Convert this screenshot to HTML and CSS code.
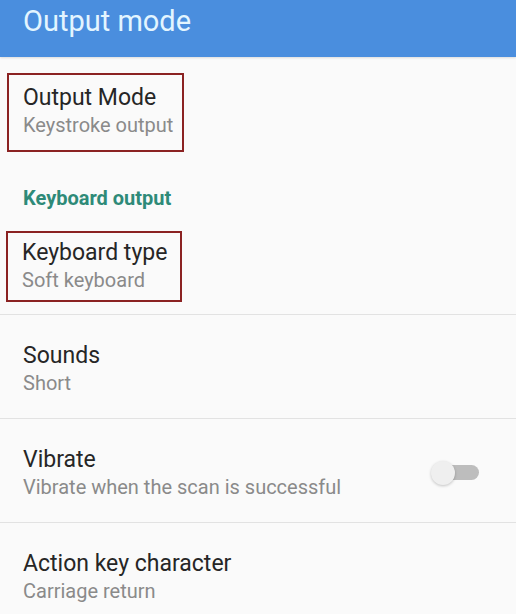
FILE: index.html
```html
<!DOCTYPE html>
<html lang="en">
<head>
    <meta charset="UTF-8">
    <meta name="viewport" content="width=device-width, initial-scale=1.0">
    <title>Output mode</title>
    <link rel="stylesheet" href="styles.css">
</head>
<body>
    <header class="toolbar">
        <h1>Output mode</h1>
    </header>

    <div class="prefs">
        <div class="pref pref-first">
            <div class="marked marked-wide">
                <div class="pref-title">Output Mode</div>
                <div class="pref-summary">Keystroke output</div>
            </div>
        </div>

        <div class="category">Keyboard output</div>

        <div class="pref pref-marked">
            <div class="marked marked-tight">
                <div class="pref-title">Keyboard type</div>
                <div class="pref-summary">Soft keyboard</div>
            </div>
        </div>

        <div class="pref pref-row">
            <div class="pref-text">
                <div class="pref-title">Sounds</div>
                <div class="pref-summary">Short</div>
            </div>
        </div>

        <div class="pref pref-row">
            <div class="pref-text">
                <div class="pref-title">Vibrate</div>
                <div class="pref-summary">Vibrate when the scan is successful</div>
            </div>
            <div class="switch">
                <span class="switch-thumb"></span>
                <span class="switch-track"></span>
            </div>
        </div>

        <div class="pref pref-row">
            <div class="pref-text">
                <div class="pref-title">Action key character</div>
                <div class="pref-summary">Carriage return</div>
            </div>
        </div>
    </div>
</body>
</html>
```

FILE: styles.css
```css
body {
  margin: 0;
  background: #fafafa;
  font-family: Roboto, "Noto Sans", sans-serif;
  overflow: hidden;
}

.toolbar {
  background: #4a8ede;
  height: 57px;
  padding: 4px 23px 0;
  box-sizing: border-box;
  box-shadow: 0 1px 2px rgba(0, 0, 0, 0.12);
}

.toolbar h1 {
  margin: 0;
  font-size: 29px;
  line-height: 34px;
  font-weight: 400;
  color: #e3f5ff;
}

.pref {
  display: flex;
  align-items: center;
  padding-left: 23px;
}

.pref-first {
  margin-top: 16px;
}

.pref-title {
  padding-top: 2px;
  font-size: 23px;
  line-height: 26px;
  color: #262626;
}

.pref-summary {
  margin-top: 1px;
  font-size: 20px;
  line-height: 26px;
  color: #8a8a8a;
}

.marked {
  border: 2px solid #8b2222;
  margin-left: -16px;
}

.marked-wide {
  padding: 8px 0 12px 14px;
  width: 159px;
}

.marked-tight {
  padding: 5px 0 7px 14px;
  width: 158px;
  margin-left: -17px;
}

.pref-marked {
  padding-bottom: 12px;
  border-bottom: 1px solid #e2e2e2;
}

.category {
  margin: 34px 0 21px;
  padding-left: 23px;
  font-size: 20px;
  line-height: 24px;
  font-weight: 700;
  color: #2e8a78;
}

.pref-row {
  padding-top: 26px;
  padding-bottom: 22px;
  border-bottom: 1px solid #e2e2e2;
}

.pref-text {
  flex: 1;
}

.switch {
  display: flex;
  align-items: center;
  margin-right: 37px;
}

.switch-thumb {
  width: 24px;
  height: 24px;
  border-radius: 50%;
  background: #efefef;
  box-shadow: 0 1px 3px rgba(0, 0, 0, 0.22);
  position: relative;
  z-index: 1;
}

.switch-track {
  width: 38px;
  height: 15px;
  border-radius: 8px;
  background: #bdbdbd;
  margin-left: -14px;
}
```
